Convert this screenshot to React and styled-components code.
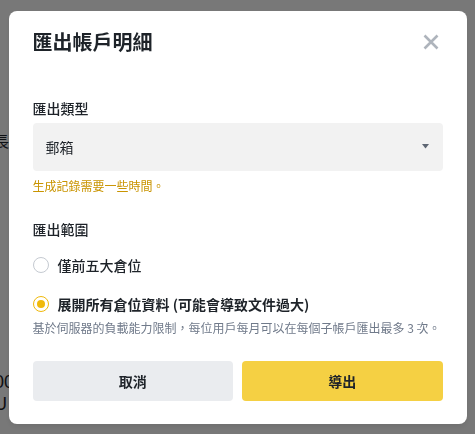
import React, { useState } from "react";
import styled, { createGlobalStyle } from "styled-components";

const GlobalStyle = createGlobalStyle`
  html, body { margin: 0; padding: 0; }
  body {
    width: 475px;
    height: 434px;
    overflow: hidden;
    background: #ffffff;
    font-family: "Noto Sans CJK TC", "Noto Sans", sans-serif;
  }
  * { box-sizing: border-box; }
`;

const Page = styled.div`
  position: relative;
  width: 475px;
  height: 434px;
  overflow: hidden;
  background: #ffffff;
`;

const Backdrop = styled.div`
  display: flex;
  flex-direction: column;
  margin-left: -6px;
  padding-top: 131px;
  color: #1e2329;
  font-family: "Liberation Sans", "Noto Sans CJK TC", sans-serif;
`;

const BgWord = styled.div`
  font-family: "Noto Sans CJK TC", sans-serif;
  font-size: 15px;
  line-height: 20px;
`;

const BgNumber = styled.div`
  font-size: 18px;
  line-height: 20px;
  margin-top: ${(p) => p.$gap || 0}px;
  margin-left: ${(p) => p.$indent || 0}px;
`;

const Overlay = styled.div`
  position: fixed;
  inset: 0;
  background: rgba(0, 0, 0, 0.53);
  display: flex;
  align-items: center;
  justify-content: center;
`;

const Modal = styled.div`
  width: 458px;
  background: #ffffff;
  border-radius: 8px;
  box-shadow: 0 3px 6px rgba(0, 0, 0, 0.08);
  padding: 17px 24px 23px;
  display: flex;
  flex-direction: column;
  color: #1e2329;
`;

const Header = styled.div`
  display: flex;
  align-items: center;
  justify-content: space-between;
`;

const Title = styled.h2`
  margin: 0;
  font-size: 20px;
  line-height: 28px;
  font-weight: 600;
  color: #1e2329;
`;

const CloseButton = styled.button`
  width: 24px;
  height: 24px;
  padding: 0;
  margin-right: 0;
  border: none;
  background: transparent;
  display: flex;
  align-items: center;
  justify-content: center;
  cursor: pointer;
  color: #aeb4bc;
`;

const Field = styled.div`
  display: flex;
  flex-direction: column;
  margin-top: ${(p) => p.$top}px;
`;

const Label = styled.div`
  font-size: 14px;
  line-height: 22px;
  font-weight: 500;
  color: #1e2329;
  margin-bottom: ${(p) => p.$bottom || 0}px;
`;

const Select = styled.div`
  height: 48px;
  background: #f2f2f2;
  border-radius: 4px;
  display: flex;
  align-items: center;
  justify-content: space-between;
  padding: 0 14px 0 13px;
  font-size: 14px;
  color: #1e2329;
`;

const Hint = styled.div`
  margin-top: 6px;
  font-size: 12px;
  line-height: 18px;
  color: #c99400;
`;

const Options = styled.div`
  display: flex;
  flex-direction: column;
  gap: 15px;
  margin-top: 13px;
`;

const Option = styled.label`
  display: flex;
  align-items: center;
  gap: 9px;
  height: 24px;
  font-size: 14px;
  font-weight: ${(p) => (p.$checked ? 600 : 500)};
  color: #1e2329;
  cursor: pointer;
`;

const Radio = styled.span`
  width: 16px;
  height: 16px;
  border-radius: 50%;
  flex: none;
  border: ${(p) => (p.$checked ? "1.5px solid #f0b90b" : "1px solid #c5cad1")};
  display: flex;
  align-items: center;
  justify-content: center;

  &::after {
    content: "";
    width: 8px;
    height: 8px;
    border-radius: 50%;
    background: ${(p) => (p.$checked ? "#f0b90b" : "transparent")};
  }
`;

const Note = styled.div`
  margin-top: 3px;
  font-size: 12px;
  line-height: 18px;
  color: #707a8a;
  white-space: nowrap;
`;

const Actions = styled.div`
  display: grid;
  grid-template-columns: 1fr 1fr;
  gap: 9px;
  margin-top: 24px;
`;

const Button = styled.button`
  height: 40px;
  border: none;
  border-radius: 4px;
  font-family: inherit;
  font-size: 14px;
  font-weight: 600;
  color: #1e2329;
  background: ${(p) => (p.$primary ? "#f5d043" : "#eaecef")};
  cursor: pointer;
`;

const CloseIcon = () => (
  <svg width="24" height="24" viewBox="0 0 24 24" fill="none">
    <path d="M5.5 5.5L18.5 18.5M18.5 5.5L5.5 18.5" stroke="currentColor" strokeWidth="2.6" />
  </svg>
);

const Caret = () => (
  <svg width="7" height="5" viewBox="0 0 7 5">
    <polygon points="0,0 7,0 3.5,4.5" fill="#5e6673" />
  </svg>
);

export default function App() {
  const [scope, setScope] = useState("all");
  return (
    <>
      <GlobalStyle />
      <Page>
        <Backdrop>
          <BgWord>長</BgWord>
          <BgNumber $gap={221}>000</BgNumber>
          <BgNumber $gap={2}>U</BgNumber>
        </Backdrop>
        <Overlay>
          <Modal>
            <Header>
              <Title>匯出帳戶明細</Title>
              <CloseButton aria-label="close">
                <CloseIcon />
              </CloseButton>
            </Header>

            <Field $top={41}>
              <Label $bottom={4}>匯出類型</Label>
              <Select>
                <span>郵箱</span>
                <Caret />
              </Select>
              <Hint>生成記錄需要一些時間。</Hint>
            </Field>

            <Field $top={23}>
              <Label>匯出範圍</Label>
              <Options>
                <Option $checked={scope === "top"} onClick={() => setScope("top")}>
                  <Radio $checked={scope === "top"} />
                  僅前五大倉位
                </Option>
                <Option $checked={scope === "all"} onClick={() => setScope("all")}>
                  <Radio $checked={scope === "all"} />
                  展開所有倉位資料 (可能會導致文件過大)
                </Option>
              </Options>
              <Note>基於伺服器的負載能力限制，每位用戶每月可以在每個子帳戶匯出最多 3 次。</Note>
            </Field>

            <Actions>
              <Button>取消</Button>
              <Button $primary>導出</Button>
            </Actions>
          </Modal>
        </Overlay>
      </Page>
    </>
  );
}
